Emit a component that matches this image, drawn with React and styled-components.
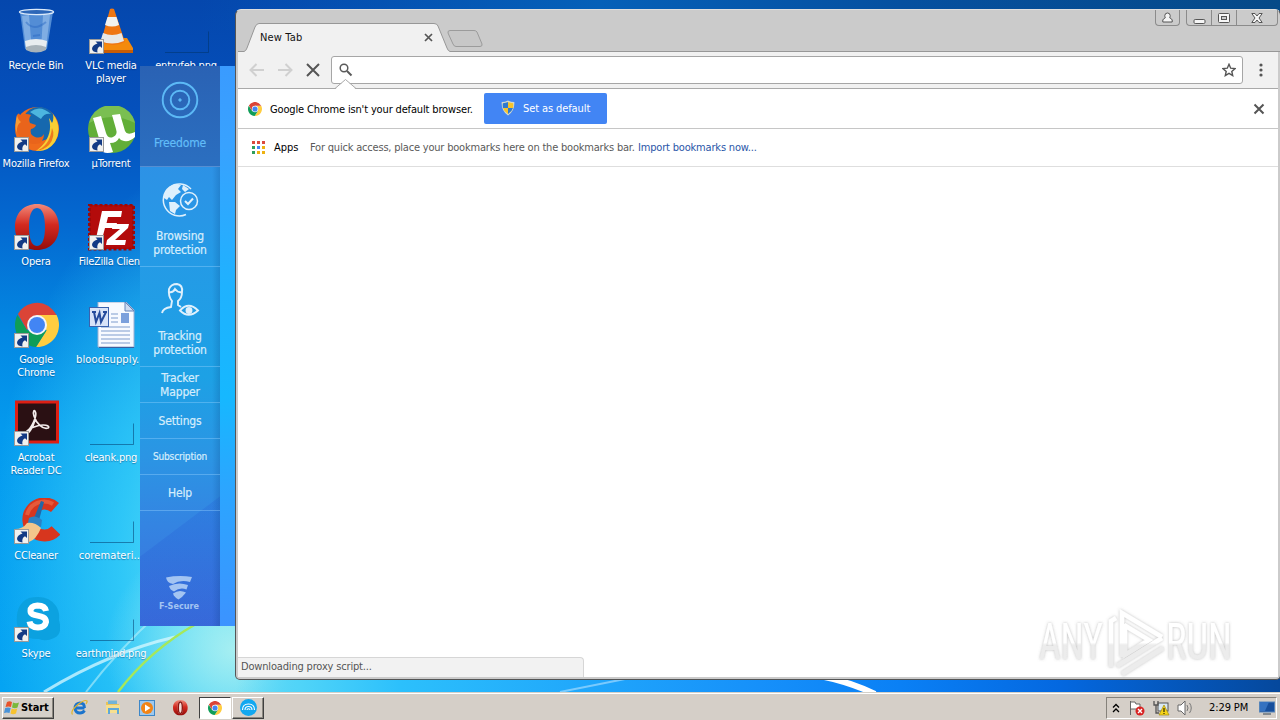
import React from "react";
import styled, { createGlobalStyle } from "styled-components";


const GlobalStyle = createGlobalStyle`
  * {
    box-sizing: border-box;
  }

  body {
    margin: 0;
    overflow: hidden;
    font-family: "DejaVu Sans Condensed", "DejaVu Sans", sans-serif;
    font-stretch: condensed;
    font-size: 11px;
  }

  svg {
    display: block;
    flex: none;
  }
`


const Screen = styled.div`
  position: relative;
  display: flex;
  flex-direction: column;
  width: 1280px;
  height: 720px;
  overflow: hidden;
`

const Desktop = styled.div`
  position: relative;
  height: 692px;
  overflow: hidden;
  background:
    linear-gradient(90deg, rgba(90, 220, 245, 0) 236px, #50d4f8 300px, #2cc0fc 400px, #1fa5fb 600px, #1690fa 760px, #0a80f5 900px, #0468e0 1060px, #05489c 1280px) 0 100% / 1280px 30px no-repeat,
    linear-gradient(90deg, rgba(3, 69, 168, 0) 200px, #0560b8 600px, #0550a0 900px, #064a88 1280px) 0 0 / 1280px 30px no-repeat,
    radial-gradient(ellipse 130px 120px at 235px 650px, rgba(190, 245, 240, 0.8), rgba(150, 240, 245, 0) 100%),
    radial-gradient(ellipse 235px 400px at 225px 560px, rgba(105, 232, 248, 0.95), rgba(60, 212, 250, 0.75) 45%, rgba(20, 180, 248, 0) 100%),
    linear-gradient(180deg, #0547ad 0, #0450bc 110px, #0468d0 220px, #0388e2 330px, #049aee 430px, #05a4f3 692px);
`

const Light = styled.svg`
  position: absolute;
  left: 0;
  top: 0;
`

const IconGrid = styled.div`
  position: relative;
  display: grid;
  grid-auto-flow: column;
  grid-template-rows: repeat(7, 98px);
  grid-auto-columns: 75px;
  width: 225px;
  margin-left: -2px;
  padding-top: 8px;
`

const Shortcut = styled.div`
  display: flex;
  flex-direction: column;
  align-items: center;
`

const ShortcutLabel = styled.div`
  margin-top: 3px;
  padding-left: 1px;
  color: #fff;
  font-size: 11px;
  line-height: 13px;
  letter-spacing: ${props => props.$spacing || -0.2}px;
  text-align: center;
  white-space: pre;
  text-shadow: 0 1px 1px rgba(0, 30, 80, 0.4);
`


const Freedome = styled.div`
  position: absolute;
  left: 140px;
  top: 66px;
  display: flex;
  width: 96px;
  height: 560px;
  background: linear-gradient(180deg, #3a9bff 0, #38a2ff 80px, #1fb2ff 220px, #16b8ff 330px, #2ba6ff 420px, #3c93ff 560px);
`

const FreedomeNav = styled.div`
  display: flex;
  flex-direction: column;
  width: 80px;
  background:
    linear-gradient(90deg, rgba(0, 50, 110, 0) 72px, rgba(0, 50, 110, 0.18) 80px),
    linear-gradient(143deg, rgba(0, 0, 0, 0) 79%, rgba(20, 50, 200, 0.12) 79.2%),
    linear-gradient(180deg, #2d92e6 100px, #249be6 200px, #1da1e5 310px, #2b95e4 390px, #3484e2 460px, #3c70dc 560px);
`

const NavItem = styled.div`
  display: flex;
  flex-direction: column;
  align-items: center;
  justify-content: center;
  height: 36px;
  border-bottom: 1px solid rgba(150, 210, 255, 0.4);
  color: #d6edfc;
`

const NavTile = styled(NavItem)`
  justify-content: flex-start;
  height: ${props => props.$active ? 101 : 100}px;
  padding-top: ${props => props.$active ? 14 : 13}px;
  background: ${props => props.$active ? 'linear-gradient(180deg, #2a62b4, #2b6fc0)' : 'none'};
  color: ${props => props.$active ? '#62bdf8' : '#d6edfc'};
`

const NavLabel = styled.div`
  margin-top: ${props => props.$gap || 0}px;
  font-size: ${props => props.$small ? 10 : 12}px;
  line-height: 14px;
  letter-spacing: -0.15px;
  text-align: center;
  white-space: pre;
  -webkit-text-stroke: 0.2px currentColor;
`

const FSecure = styled.div`
  display: flex;
  flex-direction: column;
  align-items: center;
  margin-top: auto;
  padding: 0 2px 14px 0;
  color: #a3c4f2;
  font-size: 9px;
  line-height: 11px;
  font-weight: 700;
`


const Browser = styled.div`
  position: absolute;
  left: 235px;
  top: 9px;
  display: flex;
  flex-direction: column;
  width: 1046px;
  height: 671px;
  padding: 0 2px 2px;
  border: 1px solid #555;
  border-top-color: #dedede;
  border-radius: 6px 6px 5px 5px;
  background: #cbcbcb;
`

const TabStrip = styled.div`
  display: flex;
  align-items: flex-end;
  height: 42px;
  border-bottom: 1px solid #979797;
  margin-right: -2px;
`

const Tab = styled.div`
  position: relative;
  display: flex;
  align-items: center;
  width: 206px;
  height: 29px;
  margin: 0 0 -1px 6px;
  padding: 0 17px 1px 16px;
  justify-content: space-between;
  color: #111;

  > svg:first-child {
    position: absolute;
    left: 0;
    top: 0;
  }
`

const TabTitle = styled.span`
  position: relative;
  letter-spacing: 0.15px;
`

const TabClose = styled.svg`
  position: relative;
`

const NewTab = styled.svg`
  margin: 0 0 3px -3px;
`

const Controls = styled.div`
  display: flex;
  align-self: flex-start;
  gap: 6px;
  margin-left: auto;
  margin-right: 2px;
`

const ControlGroup = styled.div`
  display: flex;
  height: 16px;
  border: 1px solid #8b8b8b;
  border-top: 0;
  border-radius: 0 0 4px 4px;
`

const Control = styled.div`
  display: flex;
  align-items: center;
  justify-content: center;
  width: ${props => props.$width}px;

  & + & {
    border-left: 1px solid #8b8b8b;
  }
`

const Toolbar = styled.div`
  display: flex;
  align-items: center;
  height: 37px;
  padding-left: 10px;
  border-bottom: 1px solid #a9a9a9;
  background: #f1f1f1;
`

const NavButton = styled.svg`
  margin-right: 10px;
`

const Omnibox = styled.div`
  display: flex;
  align-items: center;
  justify-content: space-between;
  width: 912px;
  height: 28px;
  margin-left: -1px;
  padding: 0 6px 0 7px;
  border: 1px solid #a6a6a6;
  border-radius: 3px;
  background: #fff;
`

const MenuDots = styled.svg`
  margin-left: 16px;
`

const Infobar = styled.div`
  position: relative;
  display: flex;
  align-items: center;
  height: 40px;
  padding: 0 13px 0 10px;
  border-bottom: 1px solid #c6c6c6;
  background: #fff;
`

const InfobarArrow = styled.svg`
  position: absolute;
  left: 97px;
  top: -10px;
`

const InfobarText = styled.span`
  width: 222px;
  padding: 1px 0 0 8px;
  color: #000;
  letter-spacing: -0.15px;
  white-space: nowrap;
`

const DefaultButton = styled.div`
  display: flex;
  align-items: center;
  width: 123px;
  height: 31px;
  padding: 0 0 1px 17px;
  gap: 8px;
  border-radius: 2px;
  background: #4285f4;
  color: #fff;
  letter-spacing: -0.1px;
  white-space: nowrap;
`

const InfobarClose = styled.svg`
  margin-left: auto;
`

const Bookmarks = styled.div`
  display: flex;
  align-items: center;
  height: 38px;
  padding: 0 0 1px 14px;
  border-bottom: 1px solid #dedede;
  background: #fff;
  color: #5a5a5a;
  white-space: nowrap;
`

const AppsLabel = styled.span`
  width: 45px;
  padding-left: 9px;
  color: #000;
`

const BookmarksHint = styled.span`
  width: 328px;
  letter-spacing: -0.2px;
`

const ImportLink = styled.span`
  color: #2a56a8;
  letter-spacing: -0.18px;
`

const Page = styled.div`
  display: flex;
  align-items: flex-end;
  flex: 1;
  background: #fff;
`

const StatusBubble = styled.div`
  width: 346px;
  height: 20px;
  padding: 0 3px;
  border: 1px solid #d6d6d6;
  border-left: 0;
  border-bottom: 0;
  border-top-right-radius: 4px;
  background: #f2f2f2;
  color: #555;
  line-height: 18px;
  letter-spacing: -0.17px;
`

const Watermark = styled.svg`
  position: absolute;
  left: 1030px;
  top: 600px;
`


const Taskbar = styled.div`
  display: flex;
  align-items: center;
  height: 28px;
  padding: 2px 3px 0 2px;
  border-top: 1px solid #d4d0c8;
  box-shadow: inset 0 1px #fff;
  background: #d5cfc8;
`

const StartButton = styled.div`
  display: flex;
  align-items: center;
  gap: 1px;
  width: 52px;
  height: 22px;
  margin-right: 9px;
  padding-left: 1px;
  border: 1px solid;
  border-color: #fff #404040 #404040 #fff;
  box-shadow: inset -1px -1px #8b8880;
  color: #000;
  font-size: 11px;
  font-weight: 700;
  letter-spacing: -0.1px;
`

const TaskButton = styled.div`
  display: flex;
  align-items: center;
  justify-content: center;
  width: 33.5px;
  height: 22px;
  border: 1px solid transparent;
`

const RunningButton = styled(TaskButton)`
  width: 32px;
  margin-left: 1.5px;
  border-color: ${props => props.$active ? '#404040 #fff #fff #404040' : '#fff #404040 #404040 #fff'};
  box-shadow: ${props => props.$active ? 'none' : 'inset -1px -1px #8b8880'};
  background: ${props => props.$active ? '#fff' : 'transparent'};
`

const Tray = styled.div`
  display: flex;
  align-items: center;
  width: 171px;
  height: 22px;
  margin-left: auto;
  padding-left: 5px;
  border: 1px solid;
  border-color: #85827b #fff #fff #85827b;
`

const Clock = styled.span`
  width: 50px;
  margin-left: 17px;
  color: #000;
  font-size: 11px;
  letter-spacing: -0.1px;
  white-space: nowrap;
`


const Badge = () => (
  <g>
    <rect x="2.500" y="31.500" width="14" height="14" fill="#f1f1ef" stroke="#9a9a9a" />
    <path d="M8.500 33.500H15V40L13 38.300Q9.500 40 10.500 44.500Q5.500 44 5 41Q5 37 10.500 35.500Z" fill="#123a85" />
  </g>
)

const RecycleBin = () => (
  <svg width="48" height="48" viewBox="0 0 48 48">
    <path d="M8 4L13 41Q24 47 35 41L41 4Z" fill="#6da4e2" opacity=".75" />
    <path d="M10 8L14 40L20 43L17 7ZM31 7L29 43L34 40L38 7Z" fill="#b5d4f5" opacity=".45" />
    <path d="M13 33Q24 29 35 33L34 41Q24 47 14 41Z" fill="#e8edf0" />
    <path d="M14 39Q24 35 34 39L34 42Q24 47 14 42Z" fill="#a8b3ba" />
    <path d="M14 14Q22 24 34 14M21 28L28 27" stroke="#2766c2" strokeWidth="2" opacity=".45" fill="none" />
    <ellipse cx="24.500" cy="4" rx="17" ry="2.600" fill="#2d67b8" stroke="#dceafa" strokeWidth="1.400" />
  </svg>
)

const Vlc = () => (
  <svg width="48" height="48" viewBox="0 0 48 48">
    <path d="M15 30H40L46 40V44H12L8 40Z" fill="#f48a0c" />
    <path d="M12 42H46V45H12Z" fill="#c85d05" />
    <path d="M23 1Q25 0 27 1L38 34Q26 40 14 34Z" fill="#ef7612" />
    <path d="M20.500 9H29.500L32 17Q25 20 18 17Z" fill="#f2f2f0" />
    <path d="M16 25Q25 29 34.500 25L37 33Q25 38 13.500 33Z" fill="#e7e8e7" />
    <Badge />
  </svg>
)

const Firefox = () => (
  <svg width="48" height="48" viewBox="0 0 48 48">
    <circle cx="25" cy="23" r="22" fill="#ef6b1c" />
    <circle cx="27" cy="18" r="17" fill="#1668ae" />
    <path d="M18 6Q28 -2 39 8Q32 7 29 13Q23 9 18 6Z" fill="#4cb5df" />
    <path d="M41 8Q51 22 43 36Q36 46 24 45Q42 32 37 12Q38 13 40 17Q42 14 41 8Z" fill="#f8cf35" />
    <path d="M24 45Q38 40 40 22Q44 30 37 39Q32 44 24 45Z" fill="#ee7a1e" />
    <path d="M5 9Q7 6 8 9Q14 7 19 9Q16 13 18 17L24 19Q23 22 19 23Q17 28 23 31Q29 33 32 28Q32 39 21 38Q10 38 6 27Q2 20 5 9Z" fill="#e9641b" />
    <path d="M5 9Q6 14 9 16Q4 19 5 27Q2 21 5 9Z" fill="#f79b35" />
    <Badge />
  </svg>
)

const UTorrent = () => (
  <svg width="48" height="48" viewBox="0 0 48 48">
    <circle cx="25" cy="23" r="24" fill="#62ae38" />
    <path d="M2 17Q6 0 25 -1Q44 0 48 17Q25 5 2 17Z" fill="#8bca63" opacity=".6" />
    <path d="M6 12L14 10L19 27Q21 33 26 31Q31 29 29 23L25 9L33 8L38 25Q40 30 48 26L48 31Q43 36 37 35Q34 35 32 32Q30 37 23 37L26 46Q20 48 16 46Z" fill="#fff" />
    <Badge />
  </svg>
)

const Opera = ({ size = 48, badge = true }) => (
  <svg width={size} height={size} viewBox="0 0 48 48">
    <defs>
      <linearGradient id="opera" x1="0" y1="0" x2="0" y2="1">
        <stop offset="0" stopColor="#f28b7b" />
        <stop offset=".45" stopColor="#d32a20" />
        <stop offset="1" stopColor="#930d0c" />
      </linearGradient>
    </defs>
    <path d="M25 0C38 0 47 9 47 23S38 46 25 46S3 37 3 23S12 0 25 0ZM25 4C19 4 17 13 17 23S19 42 25 42S33 33 33 23S31 4 25 4Z" fill="url(#opera)" fillRule="evenodd" />
    {!badge && <path d="M25 6C20 6 19 13 19 23S20 40 25 40S31 33 31 23S30 6 25 6Z" fill="#f0dcd8" stroke="#8d1410" strokeWidth="4" />}
    {badge && <Badge />}
  </svg>
)

const FileZilla = () => (
  <svg width="48" height="48" viewBox="0 0 48 48">
    <rect x="2.500" y="1" width="44" height="44" fill="#b30b0b" stroke="#9d0808" strokeWidth="3" strokeDasharray="3 2" />
    <path d="M15 7H35L34 13H21L19.500 19H30L28.500 24H18L14 39H8ZM26 20H42L41 24L28 36H39L38 41H19L20 36L33 25H25Z" fill="#fff" />
    <Badge />
  </svg>
)

const ChromeLogo = ({ size, badge }) => (
  <svg width={size} height={size} viewBox={badge ? "0 0 48 48" : "3 1 44 44"}>
    <path d="M44.600 13H25L34.500 28.500L24 45A22 22 0 0 0 44.600 13Z" fill="#ffcd40" />
    <path d="M5.400 13L15.500 28.500H34.500L24 45A22 22 0 0 1 5.400 13Z" fill="#0f9d58" />
    <path d="M5.900 12L15 28L25 13H44.600Q35 -2 20 1.500Q10 4 5.900 12Z" fill="#db4437" />
    <circle cx="25" cy="23" r="10" fill="#f4f6f8" />
    <circle cx="25" cy="23" r="8" fill="#4285f4" />
    {badge && <Badge />}
  </svg>
)

const WordDoc = () => (
  <svg width="48" height="48" viewBox="0 0 48 48">
    <path d="M11 0H39L47 8V45H11Z" fill="#f7faff" stroke="#9db0d2" />
    <path d="M38 0V9H47Z" fill="#cfdcf1" stroke="#6585bb" />
    <path d="M12 45.500H47" stroke="#3e5f9e" />
    <path d="M24 12H31M24 16H31M24 20H31M14 25H43M14 29H43M14 33H43M14 37H43M14 41H43" stroke="#7f9bcd" strokeWidth="1.200" />
    <rect x="34" y="11" width="8" height="10" fill="#7ba0dc" />
    <rect x="2.500" y="5.500" width="19" height="19" fill="#d7e3f8" stroke="#3a62ae" />
    <path d="M5 10H9M7 10L9 20L12.500 11L14 20L19 10M16 10H20" fill="none" stroke="#244b9c" strokeWidth="2" />
  </svg>
)

const Ghost = () => (
  <svg width="48" height="48" viewBox="0 0 48 48">
    <path d="M3 44.500H46.500V23.500" fill="none" stroke="rgba(0,50,100,.5)" strokeWidth="1" />
  </svg>
)

const Acrobat = () => (
  <svg width="48" height="48" viewBox="0 0 48 48">
    <rect x="4.500" y="2" width="41" height="40" fill="#2a1013" stroke="#dc1f14" strokeWidth="3" />
    <path d="M14 32C20 28 25 16 23.500 12C22.500 9 20.500 11 22 16C24 23 31 30 36 28C39 26 32 23 22 27C18 28 12 33 14 34C17 34 21 27 23 20" fill="none" stroke="#f4eded" strokeWidth="1.700" />
    <Badge />
  </svg>
)

const CCleaner = () => (
  <svg width="48" height="48" viewBox="0 0 48 48">
    <path d="M43 9.500A16 16 0 1 0 44 32.500" fill="none" stroke="#d7361e" strokeWidth="12" />
    <path d="M41 6A17.500 17.500 0 0 0 15 17" fill="none" stroke="#e5593a" strokeWidth="4" />
    <path d="M29 3L32 4L27 22L22 20Z" fill="#2168a8" />
    <path d="M17 20Q23 16 30 22L29 29L16 25Z" fill="#2c82c4" />
    <path d="M15 25Q23 24 29 30Q24 42 17 44Q8 42 3 31Q11 31 15 25Z" fill="#f3c68b" />
    <Badge />
  </svg>
)

const Skype = () => (
  <svg width="48" height="48" viewBox="0 0 48 48">
    <path d="M17 2Q36 -2 44 10Q48 16 47 24Q51 38 42 42Q34 46 27 43Q9 44 5 28Q3 8 17 2Z" fill="#0a9fdc" opacity=".85" />
    <path d="M34 15Q33 9.500 25.500 9.500Q18.500 10 18.500 15C18.500 22 34 17 34 26Q33 31.500 26 31.500Q18.500 31.500 17.500 25.500" fill="none" stroke="#fff" strokeWidth="6" />
    <Badge />
  </svg>
)

const Target = () => (
  <svg width="40" height="40" viewBox="0 0 40 40" fill="none" stroke="#5cb9f6">
    <circle cx="20" cy="20" r="17.300" strokeWidth="1.900" />
    <circle cx="20" cy="20" r="9.300" strokeWidth="1.900" />
    <circle cx="20" cy="20" r="1.200" fill="#5cb9f6" />
  </svg>
)

const Globe = () => (
  <svg width="40" height="40" viewBox="0 0 40 40" fill="none" stroke="#dff0fc" strokeWidth="1.500">
    <path d="M31 9A16 16 0 1 0 26 34.500" />
    <path d="M4 15Q8 5 16 4L21 5L18 9L21 12L16 15L12 20L9 17L7 20L4 18ZM9 22L15 22L20 26L16 30L15 34L10 31ZM23 5L29 9L25 12L22 9Z" fill="#dff0fc" stroke="none" />
    <circle cx="29" cy="21" r="8.500" />
    <path d="M25 21L28 24L33 18.500" strokeWidth="2" />
  </svg>
)

const Tracker = () => (
  <svg width="40" height="40" viewBox="0 0 40 40" fill="none" stroke="#dff0fc" strokeWidth="1.900">
    <path d="M2 33Q3 28 11 27L12 21Q8 16 9 9Q11 4 17 4Q23 5 22 12Q22 18 18 21L18 25L21 27M9 12Q13 13 15 9Q18 13 22 12" />
    <path d="M20 30.500Q28.500 21 38 30.500Q28.500 39 20 30.500Z" />
    <circle cx="29" cy="30.500" r="2.500" fill="#dff0fc" />
  </svg>
)

const FSecureLogo = () => (
  <svg width="26" height="26" viewBox="0 0 26 26" fill="#a3c4f2">
    <path d="M0 2.500Q13 0 26 2L24 7Q14 4.500 7 9Q1 8 0 2.500Z" />
    <path d="M3 11Q12 6.500 22 10L20.500 14.500Q14 12 8 16.500Q4 15 3 11Z" />
    <path d="M7 18.500Q13 14 20 17.500L16 22L12.500 24.500Q8 22 7 18.500Z" />
  </svg>
)

const Shield = () => (
  <svg width="14" height="16" viewBox="0 0 14 16">
    <path d="M7 .5Q10 2 13.300 2Q14 11 7 15.500Q0 11 .7 2Q4 2 7 .5Z" fill="#d5d9c8" />
    <path d="M7 2V8H2Q1.500 5.500 1.900 3.200Q4.700 3 7 2ZM12 8Q11 11.500 7 14V8Z" fill="#2f79cf" />
    <path d="M7 2Q9.300 3 12.100 3.200Q12.500 5.500 12 8H7ZM2 8H7V14Q3 11.500 2 8Z" fill="#f6c32c" />
  </svg>
)

const WindowsFlag = () => (
  <svg width="16" height="16" viewBox="0 0 16 16">
    <path d="M3 2Q5.500 .5 8 2L7 7Q4.500 6 1.500 7Z" fill="#e8532a" />
    <path d="M9 2.500Q12 4 15 2.500L13.500 7.500Q11 9 8 7.500Z" fill="#7ab83a" />
    <path d="M1.200 8Q4 7 6.700 8L5.500 13Q3 12 0 13Z" fill="#4a93d8" />
    <path d="M7.700 8.500Q10.500 10 13.200 8.500L12 13.500Q9 15 6.500 13.500Z" fill="#f7c22f" />
  </svg>
)

const InternetExplorer = () => (
  <svg width="17" height="17" viewBox="0 0 17 17" fill="none">
    <path d="M13.500 9H5M13.500 9Q13.500 4 9 4Q4 4.500 4 9.500Q4.500 14 9 14Q12 14 13.500 11.500" stroke="#1c74cc" strokeWidth="2.800" />
    <path d="M1.500 15.500Q-1 12 7 5.500Q14 0 16 2Q16.500 3 15 5" stroke="#e2b52c" strokeWidth="1.200" />
  </svg>
)

const Explorer = () => (
  <svg width="17" height="17" viewBox="0 0 17 17">
    <path d="M1 3H7L8 5H14V14H1Z" fill="#e8c35a" />
    <path d="M3 1.500H12V5H3Z" fill="#72b4d8" />
    <path d="M1 6H15V14H1Z" fill="#f6df8f" />
    <path d="M4 15V10H13V15" fill="none" stroke="#5fa8d8" strokeWidth="2" />
  </svg>
)

const MediaPlayer = () => (
  <svg width="16" height="16" viewBox="0 0 16 16">
    <rect x=".5" y=".5" width="15" height="15" fill="#9ec9ef" stroke="#3d87c8" />
    <circle cx="8" cy="8" r="6" fill="#f28416" />
    <path d="M6 4.500L11.500 8L6 11.500Z" fill="#fff" />
  </svg>
)

const FreedomeSmall = () => (
  <svg width="17" height="17" viewBox="0 0 17 17" fill="none" stroke="#fff">
    <circle cx="8.500" cy="8.500" r="8.500" fill="#12a8f0" stroke="none" />
    <path d="M2.500 11Q2.500 5 8.500 5T14.500 11M5 11Q5 7.500 8.500 7.500T12 11M7 11Q7 9.800 8.500 9.800T10 11" strokeWidth="1.100" />
  </svg>
)

const AppsIcon = () => {
  const dots = ['#db4a3e', '#db4a3e', '#db4a3e', '#2f9e5c', '#4285f4', '#eeb211', '#2f9e5c', '#eeb211', '#eeb211']

  return (
    <svg width="13" height="13" viewBox="0 0 13 13">
      {dots.map((color, i) => (
        <rect key={i} x={(i % 3) * 5} y={Math.floor(i / 3) * 5} width="3" height="3" fill={color} />
      ))}
    </svg>
  )
}


const shortcuts = [
  { label: 'Recycle Bin', icon: <RecycleBin /> },
  { label: 'Mozilla Firefox', icon: <Firefox /> },
  { label: 'Opera', icon: <Opera /> },
  { label: 'Google\nChrome', icon: <ChromeLogo size={48} badge /> },
  { label: 'Acrobat\nReader DC', icon: <Acrobat /> },
  { label: 'CCleaner', icon: <CCleaner /> },
  { label: 'Skype', icon: <Skype /> },
  { label: 'VLC media\nplayer', icon: <Vlc /> },
  { label: 'µTorrent', icon: <UTorrent /> },
  { label: 'FileZilla Client', icon: <FileZilla />, spacing: -0.3 },
  { label: 'bloodsupply...', icon: <WordDoc />, spacing: 0.15 },
  { label: 'cleank.png', icon: <Ghost /> },
  { label: 'coremateri...', icon: <Ghost />, spacing: 0.1 },
  { label: 'earthmind.png', icon: <Ghost /> },
  { label: 'entryfeb.png', icon: <Ghost /> },
]


const FreedomePanel = () => (
  <Freedome>
    <FreedomeNav>
      <NavTile $active>
        <Target />
        <NavLabel $gap={16}>Freedome</NavLabel>
      </NavTile>
      <NavTile>
        <Globe />
        <NavLabel $gap={9}>{'Browsing\nprotection'}</NavLabel>
      </NavTile>
      <NavTile>
        <Tracker />
        <NavLabel $gap={9}>{'Tracking\nprotection'}</NavLabel>
      </NavTile>
      <NavItem><NavLabel>{'Tracker\nMapper'}</NavLabel></NavItem>
      <NavItem><NavLabel>Settings</NavLabel></NavItem>
      <NavItem><NavLabel $small>Subscription</NavLabel></NavItem>
      <NavItem><NavLabel>Help</NavLabel></NavItem>
      <FSecure>
        <FSecureLogo />
        F-Secure
      </FSecure>
    </FreedomeNav>
  </Freedome>
)


const BrowserWindow = () => (
  <Browser>
    <TabStrip>
      <Tab>
        <svg width="206" height="29" viewBox="0 0 206 29">
          <path d="M0 28.500Q2 28 3 25L11 4Q12.500 .5 15 .5H190Q193 .5 194 3L203 25Q204 28 206 28.500V29H0Z" fill="#f1f1f1" />
          <path d="M0 28.500Q2 28 3 25L11 4Q12.500 .5 15 .5H190Q193 .5 194 3L203 25Q204 28 206 28.500" fill="none" stroke="#979797" />
        </svg>
        <TabTitle>New Tab</TabTitle>
        <TabClose width="9" height="9" viewBox="0 0 9 9">
          <path d="M1 1L8 8M8 1L1 8" stroke="#555" strokeWidth="1.700" />
        </TabClose>
      </Tab>
      <NewTab width="36" height="19" viewBox="0 0 36 19">
        <path d="M3 1.500H27Q29 1.500 30 3L35 15Q35.500 17.500 33 17.500H9Q7 17.500 6 15L1 4Q.5 1.500 3 1.500Z" fill="#c7c7c7" stroke="#9b9b9b" />
      </NewTab>
      <Controls>
        <ControlGroup>
          <Control $width={23}>
            <svg width="11" height="11" viewBox="0 0 11 11" fill="#f4f4f4" stroke="#555">
              <path d="M.8 10V8Q1.500 6.500 3.300 5.800Q2.800 5 2.800 3.500Q3 1 5.500 1T8.200 3.500Q8.200 5 7.700 5.800Q9.500 6.500 10.200 8V10Z" />
            </svg>
          </Control>
        </ControlGroup>
        <ControlGroup>
          <Control $width={24}>
            <svg width="13" height="12" viewBox="0 0 13 12">
              <rect x="1" y="7.500" width="11" height="4" rx="1.200" fill="#f6f6f6" stroke="#555" />
            </svg>
          </Control>
          <Control $width={25}>
            <svg width="12" height="10" viewBox="0 0 12 10" fill="#f6f6f6" stroke="#555">
              <rect x=".5" y=".5" width="11" height="9" rx="1" />
              <rect x="3.500" y="3.500" width="5" height="3" fill="#ccc" />
            </svg>
          </Control>
          <Control $width={41}>
            <svg width="12" height="10" viewBox="0 0 12 10" fill="#f6f6f6" stroke="#555">
              <path d="M.8 .5H4L6 3L8 .5H11.200L8 5L11.200 9.500H8L6 7L4 9.500H.8L4 5Z" />
            </svg>
          </Control>
        </ControlGroup>
      </Controls>
    </TabStrip>

    <Toolbar>
      <NavButton width="18" height="16" viewBox="0 0 18 16" fill="none" stroke="#d0d0d0" strokeWidth="2">
        <path d="M16 8H3M8.500 2L2.500 8L8.500 14" />
      </NavButton>
      <NavButton width="18" height="16" viewBox="0 0 18 16" fill="none" stroke="#d0d0d0" strokeWidth="2">
        <path d="M2 8H15M9.500 2L15.500 8L9.500 14" />
      </NavButton>
      <NavButton width="18" height="16" viewBox="0 0 18 16" fill="none" stroke="#555" strokeWidth="2">
        <path d="M3 2L15 14M15 2L3 14" />
      </NavButton>
      <Omnibox>
        <svg width="14" height="14" viewBox="0 0 14 14" fill="none" stroke="#5a5a5a">
          <circle cx="5" cy="5" r="3.800" strokeWidth="1.500" />
          <path d="M8 8L12.500 12.500" strokeWidth="2" />
        </svg>
        <svg width="14" height="14" viewBox="0 0 14 14" fill="none" stroke="#555" strokeWidth="1.400">
          <path d="M7 1.300L8.700 5.200L13 5.600L9.800 8.400L10.700 12.600L7 10.400L3.300 12.600L4.200 8.400L1 5.600L5.300 5.200Z" />
        </svg>
      </Omnibox>
      <MenuDots width="4" height="14" viewBox="0 0 4 14" fill="#555">
        <circle cx="2" cy="2" r="1.600" />
        <circle cx="2" cy="7" r="1.600" />
        <circle cx="2" cy="12" r="1.600" />
      </MenuDots>
    </Toolbar>

    <Infobar>
      <InfobarArrow width="22" height="12" viewBox="0 0 22 12">
        <path d="M0 10.500L10.500 .5L21 10.500V12H0Z" fill="#fff" />
        <path d="M0 9.500L10.500 .5L21 9.500" fill="none" stroke="#a9a9a9" />
      </InfobarArrow>
      <ChromeLogo size={14} />
      <InfobarText>Google Chrome isn't your default browser.</InfobarText>
      <DefaultButton>
        <Shield />
        Set as default
      </DefaultButton>
      <InfobarClose width="12" height="12" viewBox="0 0 12 12">
        <path d="M1.500 1.500L10.500 10.500M10.500 1.500L1.500 10.500" stroke="#555" strokeWidth="2" />
      </InfobarClose>
    </Infobar>

    <Bookmarks>
      <AppsIcon />
      <AppsLabel>Apps</AppsLabel>
      <BookmarksHint>For quick access, place your bookmarks here on the bookmarks bar.</BookmarksHint>
      <ImportLink>Import bookmarks now...</ImportLink>
    </Bookmarks>

    <Page>
      <StatusBubble>Downloading proxy script...</StatusBubble>
    </Page>
  </Browser>
)


const AnyRun = () => (
  <Watermark width="240" height="85" viewBox="0 0 240 85">
    <defs>
      <filter id="soft" x="-10%" y="-10%" width="120%" height="120%">
        <feDropShadow dx="0" dy="0" stdDeviation="1.600" floodColor="#777" floodOpacity=".5" />
      </filter>
      <linearGradient id="fade" x1="0" y1="0" x2="0" y2="85" gradientUnits="userSpaceOnUse">
        <stop offset=".5" stopColor="#fff" />
        <stop offset=".53" stopColor="#ececec" />
      </linearGradient>
    </defs>
    <g filter="url(#soft)" fill="url(#fade)" fontFamily="Roboto, sans-serif" fontSize="50" fontWeight="400">
      <text x="9" y="59" textLength="64" lengthAdjust="spacingAndGlyphs">ANY</text>
      <text x="136" y="59" textLength="66" lengthAdjust="spacingAndGlyphs">RUN</text>
      <path d="M81 67V21L86 18M92 57V13L132 37M95 24V55L119 40L94 25M87 66L132 38M92 74L133 48" fill="none" stroke="url(#fade)" strokeWidth="4.500" />
    </g>
  </Watermark>
)


const App = () => {
  return (
    <Screen>
      <GlobalStyle />
      <Desktop>
        <Light width="1280" height="692" viewBox="0 0 1280 692" fill="none">
          <path d="M44 692Q110 652 175 637" stroke="#d8f8ff" strokeWidth="3" opacity=".75" />
          <path d="M86 692Q118 650 160 612" stroke="#b8f0fa" strokeWidth="2" opacity=".6" />
          <path d="M118 692Q150 650 196 624" stroke="#a6e85a" strokeWidth="2.500" />
          <path d="M560 692L640 676" stroke="#b8e2ff" strokeWidth="2" opacity=".6" />
          <path d="M820 676Q850 682 875 694" stroke="#fff" strokeWidth="6" />
        </Light>
        <IconGrid>
          {shortcuts.map(item => (
            <Shortcut key={item.label}>
              {item.icon}
              <ShortcutLabel $spacing={item.spacing}>{item.label}</ShortcutLabel>
            </Shortcut>
          ))}
        </IconGrid>
        <FreedomePanel />
        <BrowserWindow />
        <AnyRun />
      </Desktop>

      <Taskbar>
        <StartButton>
          <WindowsFlag />
          Start
        </StartButton>
        <TaskButton><InternetExplorer /></TaskButton>
        <TaskButton><Explorer /></TaskButton>
        <TaskButton><MediaPlayer /></TaskButton>
        <TaskButton><Opera size={16} badge={false} /></TaskButton>
        <RunningButton $active><ChromeLogo size={14} /></RunningButton>
        <RunningButton><FreedomeSmall /></RunningButton>
        <Tray>
          <svg width="8" height="10" viewBox="0 0 8 10" fill="none" stroke="#000" strokeWidth="1.300">
            <path d="M1 4.500L4 1.500L7 4.500M1 9L4 6L7 9" />
          </svg>
          <svg width="72" height="18" viewBox="0 0 72 18">
            <path d="M10.500 2V16M10.500 3H15L16 5H20V10H10.500" fill="#fff" stroke="#666" />
            <circle cx="20" cy="12" r="4.500" fill="#d82323" />
            <path d="M18 10L22 14M22 10L18 14" stroke="#fff" strokeWidth="1.400" />
            <rect x="38" y="4" width="10" height="8" fill="#d9e8f4" stroke="#555" />
            <path d="M34 2V6H38V2M36 6V14H39" fill="none" stroke="#555" strokeWidth="1.300" />
            <path d="M44 6L49 16H39Z" fill="#f7d417" stroke="#a08a10" strokeWidth=".7" />
            <path d="M44 9V13M44 14V15" stroke="#000" />
            <path d="M58 6H61L65 2V16L61 12H58Z" fill="#fff" stroke="#666" />
            <path d="M67 6Q69 9 67 12M69.500 4Q73 9 69.500 14" fill="none" stroke="#777" />
          </svg>
          <Clock>2:29 PM</Clock>
          <svg width="16" height="14" viewBox="0 0 16 14">
            <rect x=".5" y="1" width="15" height="10" fill="#174f9c" stroke="#5685ba" />
            <path d="M1 1H10L6 10H1Z" fill="#3572c0" />
            <path d="M4 13H12" stroke="#345" />
          </svg>
        </Tray>
      </Taskbar>
    </Screen>
  )
}


export default App
